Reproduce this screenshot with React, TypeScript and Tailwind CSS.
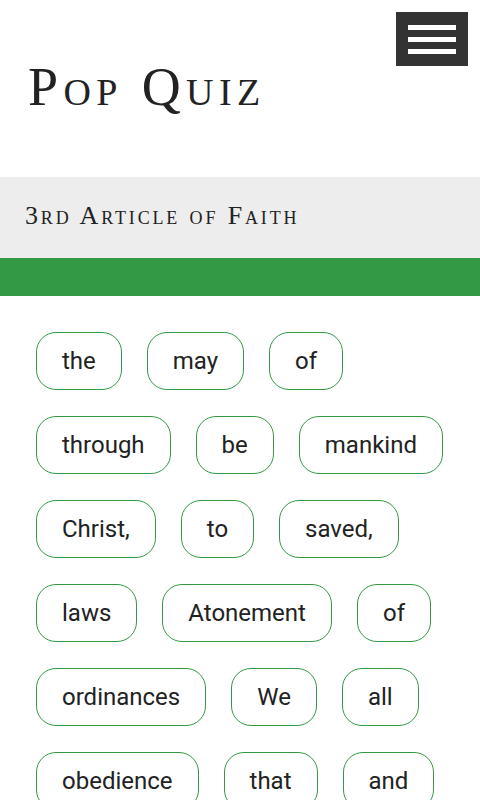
const words = [
  'the', 'may', 'of',
  'through', 'be', 'mankind',
  'Christ,', 'to', 'saved,',
  'laws', 'Atonement', 'of',
  'ordinances', 'We', 'all',
  'obedience', 'that', 'and',
  'believe', 'Gospel.', 'by', 'the', 'to', 'the',
]

export default function App() {
  return (
    <main className="min-h-screen bg-white">
      <header className="relative h-[177px] pl-[28px] pt-[60px]">
        <button
          aria-label="Menu"
          className="absolute right-[12px] top-[12px] flex h-[54px] w-[72px] flex-col items-center justify-center gap-[7px] bg-[#333333]"
        >
          <span className="block h-[5px] w-[48px] bg-white" />
          <span className="block h-[5px] w-[48px] bg-white" />
          <span className="block h-[5px] w-[48px] bg-white" />
        </button>
        <h1
          className="text-[54px] leading-none tracking-[0.1em] text-[#222222] [font-variant:small-caps]"
          style={{ fontFamily: '"Liberation Serif", serif' }}
        >
          Pop Quiz
        </h1>
      </header>

      <div className="h-[81px] bg-[#ededed] pl-[25px] pt-[26px]">
        <h2
          className="text-[26px] leading-none tracking-[0.11em] text-[#222222] [font-variant:small-caps]"
          style={{ fontFamily: '"Liberation Serif", serif' }}
        >
          3rd Article of Faith
        </h2>
      </div>

      <div className="h-[38px] bg-[#339944]" />

      <section className="flex flex-wrap gap-x-[25px] gap-y-[26px] p-9 pr-6">
        {words.map((w, i) => (
          <button
            key={i}
            className="rounded-[20px] border border-[#339944] bg-white px-[25px] py-[10px] text-[24px] leading-[36px] text-[#222222]"
            style={{ fontFamily: 'Roboto, sans-serif' }}
          >
            {w}
          </button>
        ))}
      </section>
    </main>
  )
}
